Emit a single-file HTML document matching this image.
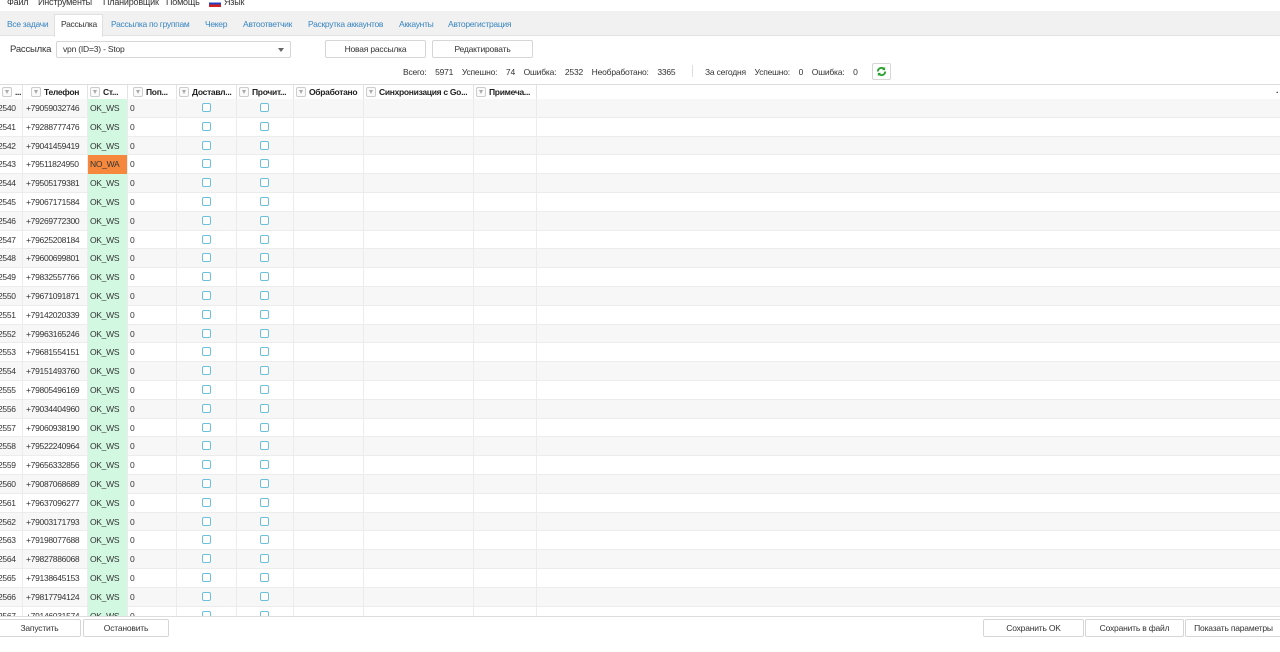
<!DOCTYPE html>
<html><head><meta charset="utf-8">
<style>
*{box-sizing:border-box;margin:0;padding:0}
body{width:1280px;height:652px;overflow:hidden;background:#fff;font-family:"Liberation Sans","DejaVu Sans",sans-serif;font-size:8.5px;color:#333;position:relative;letter-spacing:-0.2px}
.abs{position:absolute;white-space:nowrap}
.menu{top:-3px;left:0;height:10px;font-size:9px;color:#333}
.menu span{position:absolute;top:0}
.tabs{top:11px;left:0;width:1280px;height:25px;background:#f1f1f1;border-bottom:1px solid #e2e2e2}
.tab{position:absolute;top:8px;color:#3a86c0;font-size:8.5px;letter-spacing:-0.3px;white-space:nowrap}
.tabact{position:absolute;left:54px;top:3px;width:49px;height:23px;background:#fff;border:1px solid #e0e0e0;border-bottom:none}
.btn{position:absolute;background:#fff;border:1px solid #d6d6d6;border-radius:2px;text-align:center;font-size:8.5px;color:#333;white-space:nowrap}
.hdr{position:absolute;top:84px;left:0;width:1280px;height:16px;border-top:1px solid #ddd;border-bottom:1px solid #ddd;background:#fff}
.hc{position:absolute;top:0;height:15px;border-right:1px solid #e3e3e3;font-weight:bold;font-size:8.5px;line-height:15px;color:#222;overflow:hidden;white-space:nowrap;letter-spacing:-0.3px}
.fi{display:inline-block;width:10px;height:10px;border:1px solid #ccc;border-radius:2px;vertical-align:-2px;margin:0 3px 0 2px;position:relative;background:#fafafa}
.fi:after{content:"";position:absolute;left:2px;top:2px;border-left:2px solid transparent;border-right:2px solid transparent;border-top:4px solid #aaa}
.rows{position:absolute;top:99px;left:0;width:1280px;height:517px;overflow:hidden}
.r{position:relative;height:18.8px;border-bottom:1px solid #ececec}
.r:nth-child(odd){background:#f7f7f7}
.c{position:absolute;top:0;height:18.8px;line-height:18px;border-right:1px solid #ececec;font-size:8.5px;color:#333;overflow:hidden;white-space:nowrap;letter-spacing:-0.3px}
.ok{background:#d3f8e2}
.no{background:#f5883d}
.cb{position:absolute;top:4px;width:9px;height:9px;border:1px solid #6cc0dc;border-radius:2px;background:#fff}
</style></head><body>
<div class="abs menu"><span style="left:7px">Файл</span><span style="left:38px">Инструменты</span><span style="left:103px">Планировщик</span><span style="left:166px">Помощь</span><span style="left:209px;top:3px;width:12px;height:7px;background:linear-gradient(#fff 0 33%,#2440c0 33% 66%,#d42020 66%)"></span><span style="left:224px">Язык</span></div>
<div class="abs tabs">
<div class="tabact"></div>
<span class="tab" style="left:7px">Все задачи</span>
<span class="tab" style="left:61px;color:#333">Рассылка</span>
<span class="tab" style="left:111px">Рассылка по группам</span>
<span class="tab" style="left:205px">Чекер</span>
<span class="tab" style="left:243px">Автоответчик</span>
<span class="tab" style="left:308px">Раскрутка аккаунтов</span>
<span class="tab" style="left:399px">Аккаунты</span>
<span class="tab" style="left:448px">Авторегистрация</span>
</div>
<span class="abs" style="left:10px;top:44px;font-size:9.5px">Рассылка</span>
<div class="btn" style="left:56px;top:41px;width:235px;height:17px;text-align:left;padding-left:6px;line-height:15px;border-radius:2px">vpn (ID=3) - Stop<span style="position:absolute;right:6px;top:6px;border-left:3px solid transparent;border-right:3px solid transparent;border-top:4px solid #666"></span></div>
<div class="btn" style="left:325px;top:40px;width:101px;height:18px;line-height:16px">Новая рассылка</div>
<div class="btn" style="left:432px;top:40px;width:101px;height:18px;line-height:16px">Редактировать</div>
<span class="abs" style="top:67px;left:403px;font-size:8.5px">Всего:&nbsp;&nbsp;&nbsp;&nbsp;5971&nbsp;&nbsp;&nbsp;&nbsp;Успешно:&nbsp;&nbsp;&nbsp;&nbsp;74&nbsp;&nbsp;&nbsp;&nbsp;Ошибка:&nbsp;&nbsp;&nbsp;&nbsp;2532&nbsp;&nbsp;&nbsp;&nbsp;Необработано:&nbsp;&nbsp;&nbsp;&nbsp;3365</span>
<span class="abs" style="top:65px;left:692px;width:1px;height:12px;background:#ddd"></span>
<span class="abs" style="top:67px;left:705px;font-size:8.5px">За сегодня&nbsp;&nbsp;&nbsp;&nbsp;Успешно:&nbsp;&nbsp;&nbsp;&nbsp;0&nbsp;&nbsp;&nbsp;&nbsp;Ошибка:&nbsp;&nbsp;&nbsp;&nbsp;0</span>
<div class="btn" style="left:872px;top:63px;width:19px;height:17px"><svg width="11" height="11" viewBox="0 0 12 12" style="margin-top:2px"><path d="M2 6a4 4 0 0 1 7-2.6M10 6a4 4 0 0 1-7 2.6" stroke="#2aa12e" stroke-width="2" fill="none"/><path d="M10 1v3.5H6.5z M2 11V7.5h3.5z" fill="#2aa12e"/></svg></div>
<div class="hdr">
<div class="hc" style="left:0;width:23px"><span class="fi"></span>...</div>
<div class="hc" style="left:23px;width:65px"><span class="fi" style="margin-left:8px"></span>Телефон</div>
<div class="hc" style="left:88px;width:40px"><span class="fi"></span>Ст...</div>
<div class="hc" style="left:128px;width:49px"><span class="fi" style="margin-left:5px"></span>Поп...</div>
<div class="hc" style="left:177px;width:60px"><span class="fi"></span>Доставл...</div>
<div class="hc" style="left:237px;width:57px"><span class="fi"></span>Прочит...</div>
<div class="hc" style="left:294px;width:70px"><span class="fi"></span>Обработано</div>
<div class="hc" style="left:364px;width:110px"><span class="fi"></span>Синхронизация с Go...</div>
<div class="hc" style="left:474px;width:63px"><span class="fi"></span>Примеча...</div>
<div class="hc" style="left:1276px;width:4px;border:none">·</div>
</div>
<div class="rows">
<div class="r"><div class="c" style="left:-2px;width:25px">2540</div><div class="c" style="left:23px;width:65px;padding-left:3px">+79059032746</div><div class="c ok" style="left:88px;width:40px;padding-left:2px">OK_WS</div><div class="c" style="left:128px;width:49px;padding-left:2px">0</div><div class="c" style="left:177px;width:60px"></div><div class="c" style="left:237px;width:57px"></div><div class="c" style="left:294px;width:70px"></div><div class="c" style="left:364px;width:110px"></div><div class="c" style="left:474px;width:63px"></div><span class="cb" style="left:202px"></span><span class="cb" style="left:260px"></span></div>
<div class="r"><div class="c" style="left:-2px;width:25px">2541</div><div class="c" style="left:23px;width:65px;padding-left:3px">+79288777476</div><div class="c ok" style="left:88px;width:40px;padding-left:2px">OK_WS</div><div class="c" style="left:128px;width:49px;padding-left:2px">0</div><div class="c" style="left:177px;width:60px"></div><div class="c" style="left:237px;width:57px"></div><div class="c" style="left:294px;width:70px"></div><div class="c" style="left:364px;width:110px"></div><div class="c" style="left:474px;width:63px"></div><span class="cb" style="left:202px"></span><span class="cb" style="left:260px"></span></div>
<div class="r"><div class="c" style="left:-2px;width:25px">2542</div><div class="c" style="left:23px;width:65px;padding-left:3px">+79041459419</div><div class="c ok" style="left:88px;width:40px;padding-left:2px">OK_WS</div><div class="c" style="left:128px;width:49px;padding-left:2px">0</div><div class="c" style="left:177px;width:60px"></div><div class="c" style="left:237px;width:57px"></div><div class="c" style="left:294px;width:70px"></div><div class="c" style="left:364px;width:110px"></div><div class="c" style="left:474px;width:63px"></div><span class="cb" style="left:202px"></span><span class="cb" style="left:260px"></span></div>
<div class="r"><div class="c" style="left:-2px;width:25px">2543</div><div class="c" style="left:23px;width:65px;padding-left:3px">+79511824950</div><div class="c no" style="left:88px;width:40px;padding-left:2px">NO_WA</div><div class="c" style="left:128px;width:49px;padding-left:2px">0</div><div class="c" style="left:177px;width:60px"></div><div class="c" style="left:237px;width:57px"></div><div class="c" style="left:294px;width:70px"></div><div class="c" style="left:364px;width:110px"></div><div class="c" style="left:474px;width:63px"></div><span class="cb" style="left:202px"></span><span class="cb" style="left:260px"></span></div>
<div class="r"><div class="c" style="left:-2px;width:25px">2544</div><div class="c" style="left:23px;width:65px;padding-left:3px">+79505179381</div><div class="c ok" style="left:88px;width:40px;padding-left:2px">OK_WS</div><div class="c" style="left:128px;width:49px;padding-left:2px">0</div><div class="c" style="left:177px;width:60px"></div><div class="c" style="left:237px;width:57px"></div><div class="c" style="left:294px;width:70px"></div><div class="c" style="left:364px;width:110px"></div><div class="c" style="left:474px;width:63px"></div><span class="cb" style="left:202px"></span><span class="cb" style="left:260px"></span></div>
<div class="r"><div class="c" style="left:-2px;width:25px">2545</div><div class="c" style="left:23px;width:65px;padding-left:3px">+79067171584</div><div class="c ok" style="left:88px;width:40px;padding-left:2px">OK_WS</div><div class="c" style="left:128px;width:49px;padding-left:2px">0</div><div class="c" style="left:177px;width:60px"></div><div class="c" style="left:237px;width:57px"></div><div class="c" style="left:294px;width:70px"></div><div class="c" style="left:364px;width:110px"></div><div class="c" style="left:474px;width:63px"></div><span class="cb" style="left:202px"></span><span class="cb" style="left:260px"></span></div>
<div class="r"><div class="c" style="left:-2px;width:25px">2546</div><div class="c" style="left:23px;width:65px;padding-left:3px">+79269772300</div><div class="c ok" style="left:88px;width:40px;padding-left:2px">OK_WS</div><div class="c" style="left:128px;width:49px;padding-left:2px">0</div><div class="c" style="left:177px;width:60px"></div><div class="c" style="left:237px;width:57px"></div><div class="c" style="left:294px;width:70px"></div><div class="c" style="left:364px;width:110px"></div><div class="c" style="left:474px;width:63px"></div><span class="cb" style="left:202px"></span><span class="cb" style="left:260px"></span></div>
<div class="r"><div class="c" style="left:-2px;width:25px">2547</div><div class="c" style="left:23px;width:65px;padding-left:3px">+79625208184</div><div class="c ok" style="left:88px;width:40px;padding-left:2px">OK_WS</div><div class="c" style="left:128px;width:49px;padding-left:2px">0</div><div class="c" style="left:177px;width:60px"></div><div class="c" style="left:237px;width:57px"></div><div class="c" style="left:294px;width:70px"></div><div class="c" style="left:364px;width:110px"></div><div class="c" style="left:474px;width:63px"></div><span class="cb" style="left:202px"></span><span class="cb" style="left:260px"></span></div>
<div class="r"><div class="c" style="left:-2px;width:25px">2548</div><div class="c" style="left:23px;width:65px;padding-left:3px">+79600699801</div><div class="c ok" style="left:88px;width:40px;padding-left:2px">OK_WS</div><div class="c" style="left:128px;width:49px;padding-left:2px">0</div><div class="c" style="left:177px;width:60px"></div><div class="c" style="left:237px;width:57px"></div><div class="c" style="left:294px;width:70px"></div><div class="c" style="left:364px;width:110px"></div><div class="c" style="left:474px;width:63px"></div><span class="cb" style="left:202px"></span><span class="cb" style="left:260px"></span></div>
<div class="r"><div class="c" style="left:-2px;width:25px">2549</div><div class="c" style="left:23px;width:65px;padding-left:3px">+79832557766</div><div class="c ok" style="left:88px;width:40px;padding-left:2px">OK_WS</div><div class="c" style="left:128px;width:49px;padding-left:2px">0</div><div class="c" style="left:177px;width:60px"></div><div class="c" style="left:237px;width:57px"></div><div class="c" style="left:294px;width:70px"></div><div class="c" style="left:364px;width:110px"></div><div class="c" style="left:474px;width:63px"></div><span class="cb" style="left:202px"></span><span class="cb" style="left:260px"></span></div>
<div class="r"><div class="c" style="left:-2px;width:25px">2550</div><div class="c" style="left:23px;width:65px;padding-left:3px">+79671091871</div><div class="c ok" style="left:88px;width:40px;padding-left:2px">OK_WS</div><div class="c" style="left:128px;width:49px;padding-left:2px">0</div><div class="c" style="left:177px;width:60px"></div><div class="c" style="left:237px;width:57px"></div><div class="c" style="left:294px;width:70px"></div><div class="c" style="left:364px;width:110px"></div><div class="c" style="left:474px;width:63px"></div><span class="cb" style="left:202px"></span><span class="cb" style="left:260px"></span></div>
<div class="r"><div class="c" style="left:-2px;width:25px">2551</div><div class="c" style="left:23px;width:65px;padding-left:3px">+79142020339</div><div class="c ok" style="left:88px;width:40px;padding-left:2px">OK_WS</div><div class="c" style="left:128px;width:49px;padding-left:2px">0</div><div class="c" style="left:177px;width:60px"></div><div class="c" style="left:237px;width:57px"></div><div class="c" style="left:294px;width:70px"></div><div class="c" style="left:364px;width:110px"></div><div class="c" style="left:474px;width:63px"></div><span class="cb" style="left:202px"></span><span class="cb" style="left:260px"></span></div>
<div class="r"><div class="c" style="left:-2px;width:25px">2552</div><div class="c" style="left:23px;width:65px;padding-left:3px">+79963165246</div><div class="c ok" style="left:88px;width:40px;padding-left:2px">OK_WS</div><div class="c" style="left:128px;width:49px;padding-left:2px">0</div><div class="c" style="left:177px;width:60px"></div><div class="c" style="left:237px;width:57px"></div><div class="c" style="left:294px;width:70px"></div><div class="c" style="left:364px;width:110px"></div><div class="c" style="left:474px;width:63px"></div><span class="cb" style="left:202px"></span><span class="cb" style="left:260px"></span></div>
<div class="r"><div class="c" style="left:-2px;width:25px">2553</div><div class="c" style="left:23px;width:65px;padding-left:3px">+79681554151</div><div class="c ok" style="left:88px;width:40px;padding-left:2px">OK_WS</div><div class="c" style="left:128px;width:49px;padding-left:2px">0</div><div class="c" style="left:177px;width:60px"></div><div class="c" style="left:237px;width:57px"></div><div class="c" style="left:294px;width:70px"></div><div class="c" style="left:364px;width:110px"></div><div class="c" style="left:474px;width:63px"></div><span class="cb" style="left:202px"></span><span class="cb" style="left:260px"></span></div>
<div class="r"><div class="c" style="left:-2px;width:25px">2554</div><div class="c" style="left:23px;width:65px;padding-left:3px">+79151493760</div><div class="c ok" style="left:88px;width:40px;padding-left:2px">OK_WS</div><div class="c" style="left:128px;width:49px;padding-left:2px">0</div><div class="c" style="left:177px;width:60px"></div><div class="c" style="left:237px;width:57px"></div><div class="c" style="left:294px;width:70px"></div><div class="c" style="left:364px;width:110px"></div><div class="c" style="left:474px;width:63px"></div><span class="cb" style="left:202px"></span><span class="cb" style="left:260px"></span></div>
<div class="r"><div class="c" style="left:-2px;width:25px">2555</div><div class="c" style="left:23px;width:65px;padding-left:3px">+79805496169</div><div class="c ok" style="left:88px;width:40px;padding-left:2px">OK_WS</div><div class="c" style="left:128px;width:49px;padding-left:2px">0</div><div class="c" style="left:177px;width:60px"></div><div class="c" style="left:237px;width:57px"></div><div class="c" style="left:294px;width:70px"></div><div class="c" style="left:364px;width:110px"></div><div class="c" style="left:474px;width:63px"></div><span class="cb" style="left:202px"></span><span class="cb" style="left:260px"></span></div>
<div class="r"><div class="c" style="left:-2px;width:25px">2556</div><div class="c" style="left:23px;width:65px;padding-left:3px">+79034404960</div><div class="c ok" style="left:88px;width:40px;padding-left:2px">OK_WS</div><div class="c" style="left:128px;width:49px;padding-left:2px">0</div><div class="c" style="left:177px;width:60px"></div><div class="c" style="left:237px;width:57px"></div><div class="c" style="left:294px;width:70px"></div><div class="c" style="left:364px;width:110px"></div><div class="c" style="left:474px;width:63px"></div><span class="cb" style="left:202px"></span><span class="cb" style="left:260px"></span></div>
<div class="r"><div class="c" style="left:-2px;width:25px">2557</div><div class="c" style="left:23px;width:65px;padding-left:3px">+79060938190</div><div class="c ok" style="left:88px;width:40px;padding-left:2px">OK_WS</div><div class="c" style="left:128px;width:49px;padding-left:2px">0</div><div class="c" style="left:177px;width:60px"></div><div class="c" style="left:237px;width:57px"></div><div class="c" style="left:294px;width:70px"></div><div class="c" style="left:364px;width:110px"></div><div class="c" style="left:474px;width:63px"></div><span class="cb" style="left:202px"></span><span class="cb" style="left:260px"></span></div>
<div class="r"><div class="c" style="left:-2px;width:25px">2558</div><div class="c" style="left:23px;width:65px;padding-left:3px">+79522240964</div><div class="c ok" style="left:88px;width:40px;padding-left:2px">OK_WS</div><div class="c" style="left:128px;width:49px;padding-left:2px">0</div><div class="c" style="left:177px;width:60px"></div><div class="c" style="left:237px;width:57px"></div><div class="c" style="left:294px;width:70px"></div><div class="c" style="left:364px;width:110px"></div><div class="c" style="left:474px;width:63px"></div><span class="cb" style="left:202px"></span><span class="cb" style="left:260px"></span></div>
<div class="r"><div class="c" style="left:-2px;width:25px">2559</div><div class="c" style="left:23px;width:65px;padding-left:3px">+79656332856</div><div class="c ok" style="left:88px;width:40px;padding-left:2px">OK_WS</div><div class="c" style="left:128px;width:49px;padding-left:2px">0</div><div class="c" style="left:177px;width:60px"></div><div class="c" style="left:237px;width:57px"></div><div class="c" style="left:294px;width:70px"></div><div class="c" style="left:364px;width:110px"></div><div class="c" style="left:474px;width:63px"></div><span class="cb" style="left:202px"></span><span class="cb" style="left:260px"></span></div>
<div class="r"><div class="c" style="left:-2px;width:25px">2560</div><div class="c" style="left:23px;width:65px;padding-left:3px">+79087068689</div><div class="c ok" style="left:88px;width:40px;padding-left:2px">OK_WS</div><div class="c" style="left:128px;width:49px;padding-left:2px">0</div><div class="c" style="left:177px;width:60px"></div><div class="c" style="left:237px;width:57px"></div><div class="c" style="left:294px;width:70px"></div><div class="c" style="left:364px;width:110px"></div><div class="c" style="left:474px;width:63px"></div><span class="cb" style="left:202px"></span><span class="cb" style="left:260px"></span></div>
<div class="r"><div class="c" style="left:-2px;width:25px">2561</div><div class="c" style="left:23px;width:65px;padding-left:3px">+79637096277</div><div class="c ok" style="left:88px;width:40px;padding-left:2px">OK_WS</div><div class="c" style="left:128px;width:49px;padding-left:2px">0</div><div class="c" style="left:177px;width:60px"></div><div class="c" style="left:237px;width:57px"></div><div class="c" style="left:294px;width:70px"></div><div class="c" style="left:364px;width:110px"></div><div class="c" style="left:474px;width:63px"></div><span class="cb" style="left:202px"></span><span class="cb" style="left:260px"></span></div>
<div class="r"><div class="c" style="left:-2px;width:25px">2562</div><div class="c" style="left:23px;width:65px;padding-left:3px">+79003171793</div><div class="c ok" style="left:88px;width:40px;padding-left:2px">OK_WS</div><div class="c" style="left:128px;width:49px;padding-left:2px">0</div><div class="c" style="left:177px;width:60px"></div><div class="c" style="left:237px;width:57px"></div><div class="c" style="left:294px;width:70px"></div><div class="c" style="left:364px;width:110px"></div><div class="c" style="left:474px;width:63px"></div><span class="cb" style="left:202px"></span><span class="cb" style="left:260px"></span></div>
<div class="r"><div class="c" style="left:-2px;width:25px">2563</div><div class="c" style="left:23px;width:65px;padding-left:3px">+79198077688</div><div class="c ok" style="left:88px;width:40px;padding-left:2px">OK_WS</div><div class="c" style="left:128px;width:49px;padding-left:2px">0</div><div class="c" style="left:177px;width:60px"></div><div class="c" style="left:237px;width:57px"></div><div class="c" style="left:294px;width:70px"></div><div class="c" style="left:364px;width:110px"></div><div class="c" style="left:474px;width:63px"></div><span class="cb" style="left:202px"></span><span class="cb" style="left:260px"></span></div>
<div class="r"><div class="c" style="left:-2px;width:25px">2564</div><div class="c" style="left:23px;width:65px;padding-left:3px">+79827886068</div><div class="c ok" style="left:88px;width:40px;padding-left:2px">OK_WS</div><div class="c" style="left:128px;width:49px;padding-left:2px">0</div><div class="c" style="left:177px;width:60px"></div><div class="c" style="left:237px;width:57px"></div><div class="c" style="left:294px;width:70px"></div><div class="c" style="left:364px;width:110px"></div><div class="c" style="left:474px;width:63px"></div><span class="cb" style="left:202px"></span><span class="cb" style="left:260px"></span></div>
<div class="r"><div class="c" style="left:-2px;width:25px">2565</div><div class="c" style="left:23px;width:65px;padding-left:3px">+79138645153</div><div class="c ok" style="left:88px;width:40px;padding-left:2px">OK_WS</div><div class="c" style="left:128px;width:49px;padding-left:2px">0</div><div class="c" style="left:177px;width:60px"></div><div class="c" style="left:237px;width:57px"></div><div class="c" style="left:294px;width:70px"></div><div class="c" style="left:364px;width:110px"></div><div class="c" style="left:474px;width:63px"></div><span class="cb" style="left:202px"></span><span class="cb" style="left:260px"></span></div>
<div class="r"><div class="c" style="left:-2px;width:25px">2566</div><div class="c" style="left:23px;width:65px;padding-left:3px">+79817794124</div><div class="c ok" style="left:88px;width:40px;padding-left:2px">OK_WS</div><div class="c" style="left:128px;width:49px;padding-left:2px">0</div><div class="c" style="left:177px;width:60px"></div><div class="c" style="left:237px;width:57px"></div><div class="c" style="left:294px;width:70px"></div><div class="c" style="left:364px;width:110px"></div><div class="c" style="left:474px;width:63px"></div><span class="cb" style="left:202px"></span><span class="cb" style="left:260px"></span></div>
<div class="r"><div class="c" style="left:-2px;width:25px">2567</div><div class="c" style="left:23px;width:65px;padding-left:3px">+79146031574</div><div class="c ok" style="left:88px;width:40px;padding-left:2px">OK_WS</div><div class="c" style="left:128px;width:49px;padding-left:2px">0</div><div class="c" style="left:177px;width:60px"></div><div class="c" style="left:237px;width:57px"></div><div class="c" style="left:294px;width:70px"></div><div class="c" style="left:364px;width:110px"></div><div class="c" style="left:474px;width:63px"></div><span class="cb" style="left:202px"></span><span class="cb" style="left:260px"></span></div>
</div>
<div class="abs" style="left:0;top:616px;width:1280px;height:1px;background:#ddd"></div>
<div class="btn" style="left:-2px;top:619px;width:83px;height:18px;line-height:16px">Запустить</div>
<div class="btn" style="left:83px;top:619px;width:86px;height:18px;line-height:16px">Остановить</div>
<div class="btn" style="left:983px;top:619px;width:101px;height:18px;line-height:16px">Сохранить OK</div>
<div class="btn" style="left:1085px;top:619px;width:99px;height:18px;line-height:16px">Сохранить в файл</div>
<div class="btn" style="left:1185px;top:619px;width:97px;height:18px;line-height:16px">Показать параметры</div>
</body></html>
